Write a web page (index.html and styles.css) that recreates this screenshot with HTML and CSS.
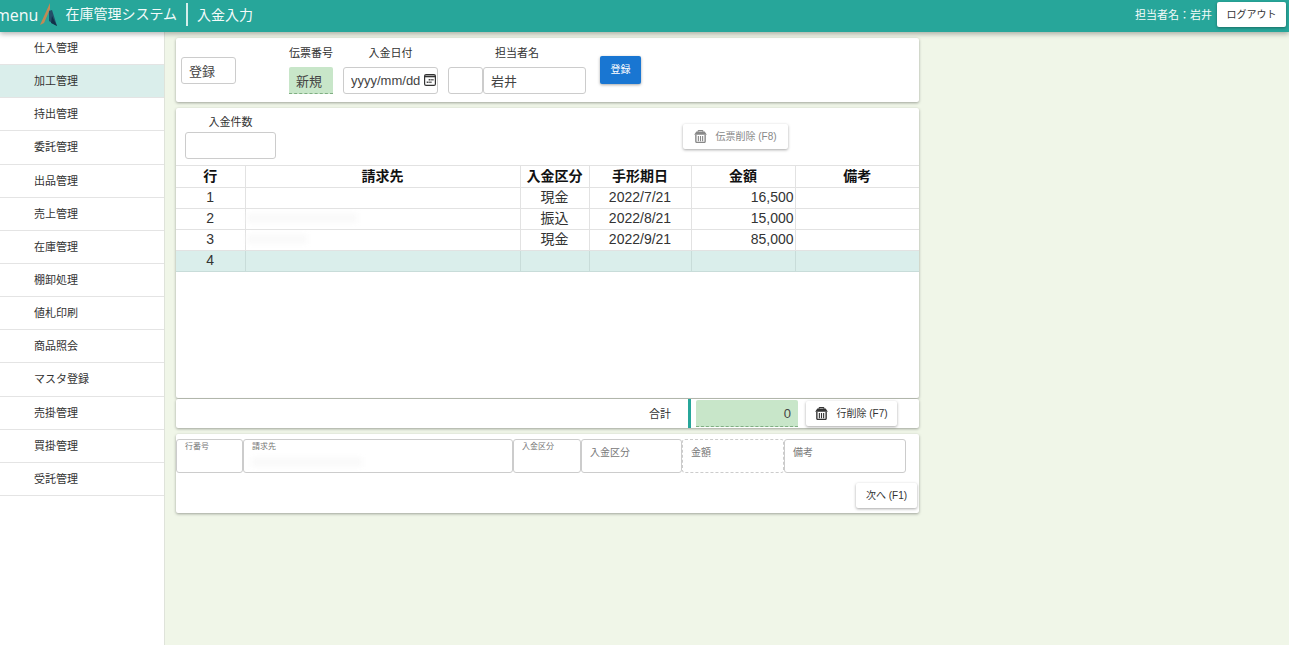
FILE: index.html
```
<!DOCTYPE html>
<html lang="ja">
<head>
<meta charset="utf-8">
<title>在庫管理システム | 入金入力</title>
<link rel="stylesheet" href="styles.css">
</head>
<body>
<svg class="defs" aria-hidden="true">
  <symbol id="trash" viewBox="0 0 14 14">
    <path d="M4.5 2V1Q4.500.6 5 .6H9Q9.500.6 9.500 1V2" fill="none" stroke="currentColor" stroke-width="1.200"/>
    <path d="M2.500 1.700H11.500L13.800 5.200H.2Z" fill="currentColor"/>
    <path d="M2 5V12.300Q2 13.300 3 13.300H11Q12 13.300 12 12.300V5" fill="none" stroke="currentColor" stroke-width="1.500"/>
    <path d="M4.700 6.500V12M7 6.500V12M9.300 6.500V12" stroke="currentColor" stroke-width="1.200"/>
  </symbol>
</svg>
<header class="topbar">
  <a class="menu-link" href="#">menu</a>
  <svg class="logo" viewBox="0 0 18 24" aria-hidden="true">
    <path d="M10 0L10 6L4 20L0 22Z" fill="#c28a55"/>
    <path d="M9 8L12 7L17 23L9 18Z" fill="#234e68"/>
    <path d="M12 13L17 23L11 20Z" fill="#123049"/>
  </svg>
  <span class="brand">在庫管理システム</span>
  <h1 class="page-title">入金入力</h1>
  <span class="user">担当者名：岩井</span>
  <button class="btn logout" type="button">ログアウト</button>
</header>
<div class="layout">
  <nav class="sidebar">
    <ul class="menu">
      <li><a href="#">仕入管理</a></li>
      <li class="active"><a href="#">加工管理</a></li>
      <li><a href="#">持出管理</a></li>
      <li><a href="#">委託管理</a></li>
      <li><a href="#">出品管理</a></li>
      <li><a href="#">売上管理</a></li>
      <li><a href="#">在庫管理</a></li>
      <li><a href="#">棚卸処理</a></li>
      <li><a href="#">値札印刷</a></li>
      <li><a href="#">商品照会</a></li>
      <li><a href="#">マスタ登録</a></li>
      <li><a href="#">売掛管理</a></li>
      <li><a href="#">買掛管理</a></li>
      <li><a href="#">受託管理</a></li>
    </ul>
  </nav>
  <main class="content">
    <form class="card slip">
      <input class="box mode" type="text" value="登録" aria-label="処理区分">
      <div class="field number">
        <label for="slip-no">伝票番号</label>
        <input class="box locked" id="slip-no" type="text" value="新規" readonly>
      </div>
      <div class="field date">
        <label for="slip-date">入金日付</label>
        <div class="date-box">
          <input class="box" id="slip-date" type="text" placeholder="yyyy/mm/dd">
          <svg viewBox="0 0 12 12" aria-hidden="true">
            <rect x=".6" y=".6" width="10.800" height="10.800" rx="1.500" fill="none" stroke="#333" stroke-width="1.200"/>
            <path d="M1 2.500H11" stroke="#333" stroke-width="1.600"/>
            <path d="M4.700 5.800H9.500M2.700 8.300H7.500" stroke="#333" stroke-width="1.400" stroke-dasharray="1.200 .6"/>
          </svg>
        </div>
      </div>
      <div class="field staff">
        <label for="staff-name">担当者名</label>
        <div class="pair">
          <input class="box code" type="text" aria-label="担当者コード">
          <input class="box" id="staff-name" type="text" value="岩井">
        </div>
      </div>
      <button class="btn primary" type="button">登録</button>
    </form>

    <section class="card list">
      <div class="list-head">
        <div class="field count">
          <label for="count">入金件数</label>
          <input class="box" id="count" type="text">
        </div>
        <button class="btn delete-slip" type="button" disabled><svg class="icon"><use href="#trash"/></svg>伝票削除 (F8)</button>
      </div>
      <table class="grid">
        <colgroup><col class="c-line"><col class="c-bill"><col class="c-kind"><col class="c-due"><col class="c-amount"><col class="c-note"></colgroup>
        <thead>
          <tr><th>行</th><th>請求先</th><th>入金区分</th><th>手形期日</th><th>金額</th><th>備考</th></tr>
        </thead>
        <tbody>
          <tr><td>1</td><td></td><td>現金</td><td>2022/7/21</td><td class="num">16,500</td><td></td></tr>
          <tr><td>2</td><td><span class="masked"></span></td><td>振込</td><td>2022/8/21</td><td class="num">15,000</td><td></td></tr>
          <tr><td>3</td><td><span class="masked short"></span></td><td>現金</td><td>2022/9/21</td><td class="num">85,000</td><td></td></tr>
          <tr class="selected"><td>4</td><td></td><td></td><td></td><td></td><td></td></tr>
        </tbody>
      </table>
    </section>

    <section class="card total">
      <label for="total">合計</label>
      <div class="total-box"><input class="box locked" id="total" type="text" value="0" readonly></div>
      <button class="btn delete-line" type="button"><svg class="icon"><use href="#trash"/></svg>行削除 (F7)</button>
    </section>

    <form class="card entry">
      <div class="entry-row">
        <div class="cell small"><label for="e-line">行番号</label><input id="e-line" type="text"></div>
        <div class="cell small bill"><label for="e-bill">請求先</label><input id="e-bill" type="text"><span class="masked"></span></div>
        <div class="cell small"><label for="e-code">入金区分</label><input id="e-code" type="text"></div>
        <div class="cell"><label for="e-kind">入金区分</label><input id="e-kind" type="text"></div>
        <div class="cell dashed"><label for="e-amount">金額</label><input id="e-amount" type="text" disabled></div>
        <div class="cell note"><label for="e-note">備考</label><input id="e-note" type="text"></div>
      </div>
      <button class="btn next" type="button">次へ (F1)</button>
    </form>
  </main>
</div>
</body>
</html>
```
FILE: styles.css
```
* { box-sizing: border-box; }
body {
  margin: 0;
  min-height: 100vh;
  display: flex;
  flex-direction: column;
  background: #f0f6e8;
  color: #333;
  font: 11px/16px "Liberation Sans", "Noto Sans CJK JP", sans-serif;
}
button, input { font: inherit; color: inherit; }
a { color: inherit; text-decoration: none; }
.defs { position: absolute; width: 0; height: 0; }

.topbar {
  position: relative;
  display: flex;
  align-items: center;
  height: 32px;
  padding-right: 3px;
  padding-bottom: 3px;
  background: #27a69a;
  color: #f4fbfa;
  box-shadow: 0 2px 5px rgba(0, 0, 0, .3);
}
.menu-link {
  margin-left: -5px;
  font: 16px/24px "Open Sans", Roboto, sans-serif;
}
.logo { width: 18px; height: 24px; margin: 0 7px 0 2px; }
.brand {
  padding-right: 9px;
  border-right: 2px solid #d4eeeb;
  font-size: 14px;
  line-height: 23px;
}
.page-title {
  margin: 0 auto 0 9px;
  font-size: 14px;
  font-weight: 400;
  line-height: 24px;
}
.user { margin-right: 5px; }

.btn {
  display: flex;
  align-items: center;
  justify-content: center;
  height: 25px;
  padding: 0;
  border: 0;
  border-radius: 2px;
  background: #fff;
  box-shadow: 0 1px 3px rgba(0, 0, 0, .35);
  color: #333;
  font-size: 10px;
  white-space: nowrap;
}
.btn:disabled { color: #888; }
.logout { width: 69px; }
.icon { width: 13px; height: 13px; margin-right: 8px; }

.layout { flex: 1; display: flex; }
.sidebar {
  width: 165px;
  flex: none;
  background: #fff;
  border-right: 1px solid #dfe3da;
}
.menu {
  display: grid;
  grid-auto-rows: 1fr;
  min-height: 464px;
  margin: 0;
  padding: 0;
  list-style: none;
}
.menu li {
  display: flex;
  align-items: center;
  padding-left: 34px;
  border-bottom: 1px solid #e4e4e4;
}
.menu .active { background: #daeeeb; }

.content {
  flex: 1;
  max-width: 754px;
  min-width: 0;
  padding: 6px 0 0 11px;
}
.card {
  margin-bottom: 6px;
  border-radius: 2px;
  background: #fff;
  box-shadow: 0 1px 3px rgba(0, 0, 0, .35);
}
.field { display: flex; flex-direction: column; gap: 6px; text-align: center; }
.box {
  display: block;
  width: 100%;
  height: 27px;
  padding: 0 7px;
  border: 1px solid #ccc;
  border-radius: 3px;
  background: #fff;
  color: #444;
  font-size: 13px;
}
.locked {
  border: 0;
  border-bottom: 1px dashed #7fae82;
  border-radius: 2px 2px 0 0;
  background: #c8e6c9;
}

.slip {
  display: flex;
  align-items: center;
  min-height: 64px;
  padding-left: 5px;
}
.mode { width: 55px; }
.slip .field { padding-bottom: 1px; }
.number { width: 44px; margin-left: 53px; }
.date { width: 95px; margin-left: 10px; }
.date-box { position: relative; }
.date-box .box { padding-right: 14px; }
.date-box .box::placeholder { color: #444; opacity: 1; }
.date-box svg { position: absolute; top: 7px; right: 2px; width: 12px; height: 12px; }
.staff { width: 138px; margin-left: 10px; }
.pair { display: flex; }
.pair .code { width: 35px; flex: none; }
.primary {
  width: 41px;
  height: 28px;
  margin-left: 14px;
  background: #1976d2;
  color: #fff;
}

.list { min-height: 290px; margin-bottom: 1px; }
.list-head {
  display: flex;
  justify-content: space-between;
  align-items: center;
  height: 57px;
  padding: 5px 131px 5px 9px;
}
.count { width: 91px; gap: 2px; }
.delete-slip { width: 105px; }

.grid {
  width: 100%;
  border-collapse: collapse;
  table-layout: fixed;
  font-size: 14px;
  line-height: 18px;
  text-align: center;
}
.c-line, .c-kind { width: 69px; }
.c-bill { width: 275px; }
.c-due { width: 102px; }
.c-amount { width: 104px; }
.grid th, .grid td {
  height: 21px;
  padding: 0 1px 2px;
  border: 1px solid #e2e2e2;
}
.grid th { height: 22px; color: #111; }
.grid th:first-child, .grid td:first-child { border-left: 0; }
.grid th:last-child, .grid td:last-child { border-right: 0; }
.grid .num { text-align: right; }
.grid .selected td { background: #daeeeb; border-color: #c8dcd9; }
.masked {
  display: block;
  width: 110px;
  height: 10px;
  background: #fafafa;
  filter: blur(2px);
}
.masked.short { width: 60px; }

.total {
  display: flex;
  align-items: center;
  justify-content: flex-end;
  height: 29px;
  padding-right: 22px;
}
.total-box {
  align-self: stretch;
  width: 110px;
  margin: 0 8px 0 17px;
  padding-top: 1px;
  padding-left: 5px;
  border-left: 3px solid #27a69a;
}
.total-box .box { text-align: right; }
.delete-line { width: 91px; }

.entry {
  display: flex;
  flex-direction: column;
  justify-content: space-between;
  min-height: 79px;
  padding: 5px 2px 5px 0;
}
.entry-row {
  display: grid;
  grid-template-columns: 67px minmax(0, 270px) 68px 101px 102px 122px;
}
.cell {
  position: relative;
  height: 34px;
  padding: 5px 8px;
  border: 1px solid #ccc;
  border-radius: 3px;
  color: #777;
}
.cell label { display: block; font-size: 10px; }
.cell.small { padding-top: 2px; }
.cell.small label { font-size: 8px; line-height: 10px; }
.cell.dashed { border-style: dashed; }
.cell input {
  position: absolute;
  inset: 0;
  width: 100%;
  padding: 10px 8px 0;
  border: 0;
  background: transparent;
}
.cell .masked { margin-top: 5px; }
.next { width: 61px; align-self: flex-end; }
```
